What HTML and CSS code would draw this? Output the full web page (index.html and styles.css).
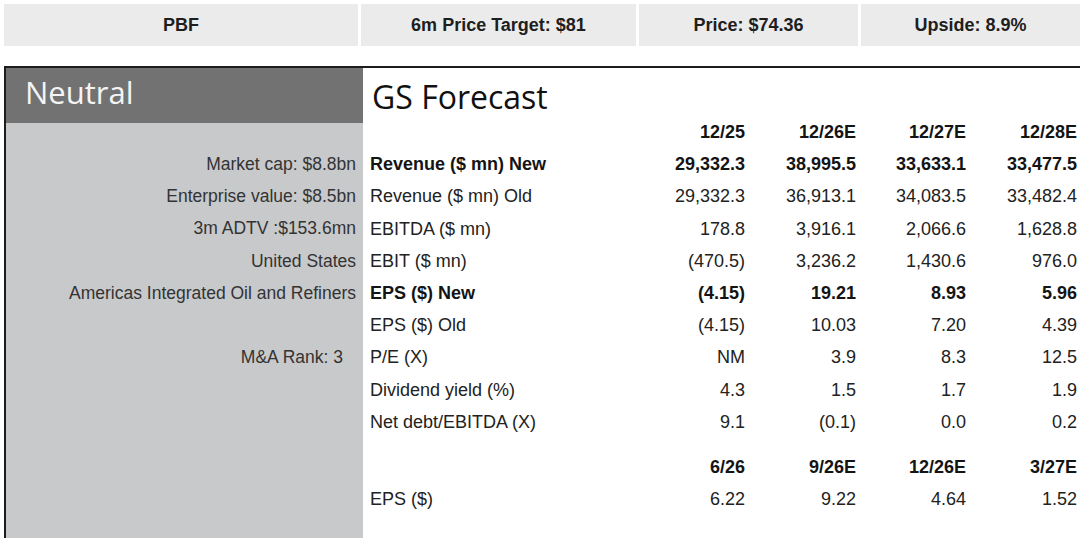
FILE: index.html
```html
<!DOCTYPE html>
<html lang="en">
<head>
<meta charset="utf-8">
<title>PBF – GS Forecast</title>
<link rel="stylesheet" href="styles.css">
</head>
<body>
<div class="topbar">
  <div class="cell c1">PBF</div>
  <div class="cell c2">6m Price Target: $81</div>
  <div class="cell c3">Price: $74.36</div>
  <div class="cell c4">Upside: 8.9%</div>
</div>

<div class="box">
  <div class="left">
    <div class="rating">Neutral</div>
    <div class="facts">
      <div class="fact">Market cap: $8.8bn</div>
      <div class="fact">Enterprise value: $8.5bn</div>
      <div class="fact">3m ADTV :$153.6mn</div>
      <div class="fact">United States</div>
      <div class="fact">Americas Integrated Oil and Refiners</div>
      <div class="fact"></div>
      <div class="fact rank">M&amp;A Rank: 3</div>
    </div>
  </div>
  <div class="right">
    <div class="title">GS Forecast</div>
    <div class="grid">
      <div class="lbl"></div><div class="num b">12/25</div><div class="num b">12/26E</div><div class="num b">12/27E</div><div class="num b">12/28E</div>
      <div class="lbl b">Revenue ($ mn) New</div><div class="num b">29,332.3</div><div class="num b">38,995.5</div><div class="num b">33,633.1</div><div class="num b">33,477.5</div>
      <div class="lbl">Revenue ($ mn) Old</div><div class="num">29,332.3</div><div class="num">36,913.1</div><div class="num">34,083.5</div><div class="num">33,482.4</div>
      <div class="lbl">EBITDA ($ mn)</div><div class="num">178.8</div><div class="num">3,916.1</div><div class="num">2,066.6</div><div class="num">1,628.8</div>
      <div class="lbl">EBIT ($ mn)</div><div class="num">(470.5)</div><div class="num">3,236.2</div><div class="num">1,430.6</div><div class="num">976.0</div>
      <div class="lbl b">EPS ($) New</div><div class="num b">(4.15)</div><div class="num b">19.21</div><div class="num b">8.93</div><div class="num b">5.96</div>
      <div class="lbl">EPS ($) Old</div><div class="num">(4.15)</div><div class="num">10.03</div><div class="num">7.20</div><div class="num">4.39</div>
      <div class="lbl">P/E (X)</div><div class="num">NM</div><div class="num">3.9</div><div class="num">8.3</div><div class="num">12.5</div>
      <div class="lbl">Dividend yield (%)</div><div class="num">4.3</div><div class="num">1.5</div><div class="num">1.7</div><div class="num">1.9</div>
      <div class="lbl">Net debt/EBITDA (X)</div><div class="num">9.1</div><div class="num">(0.1)</div><div class="num">0.0</div><div class="num">0.2</div>
      <div class="spacer"></div>
      <div class="lbl"></div><div class="num b">6/26</div><div class="num b">9/26E</div><div class="num b">12/26E</div><div class="num b">3/27E</div>
      <div class="lbl">EPS ($)</div><div class="num">6.22</div><div class="num">9.22</div><div class="num">4.64</div><div class="num">1.52</div>
    </div>
  </div>
</div>
</body>
</html>
```

FILE: styles.css
```css
html, body {
  margin: 0;
  padding: 0;
  background: #ffffff;
}

body {
  width: 1080px;
  height: 538px;
  overflow: hidden;
  font-family: "Liberation Sans", Arial, sans-serif;
  color: #222222;
}

.topbar {
  display: flex;
  gap: 3px;
  padding: 4px 0 0 4px;
}

.cell {
  height: 42px;
  background: #ebebeb;
  display: flex;
  align-items: center;
  justify-content: center;
  font-weight: bold;
  font-size: 18px;
  color: #1e1e1e;
}

.c1 { width: 354px; }
.c2 { width: 275px; }
.c3 { width: 219px; }
.c4 { flex: 1; }

.box {
  margin: 20px 0 0 4px;
  border-top: 2px solid #1c1c1c;
  border-left: 2px solid #1c1c1c;
  display: flex;
  height: 480px;
}

.left {
  width: 357px;
  flex: none;
  background: #c8c9cb;
  display: flex;
  flex-direction: column;
}

.rating {
  height: 55px;
  background: #727272;
  color: #f4f4f4;
  font-family: "Open Sans", sans-serif;
  font-size: 31px;
  line-height: 49px;
  padding-left: 19px;
  box-sizing: border-box;
}

.facts {
  padding-top: 25px;
  padding-right: 7px;
}

.fact {
  height: 32.2px;
  line-height: 32.2px;
  text-align: right;
  font-size: 17.5px;
  color: #333333;
  white-space: nowrap;
}

.fact.rank {
  padding-right: 13px;
}

.right {
  flex: 1;
  padding: 0 3px 0 7px;
}

.title {
  height: 48px;
  padding-left: 2px;
  font-family: "Open Sans", sans-serif;
  font-size: 32px;
  line-height: 58px;
  color: #111111;
  white-space: nowrap;
}

.grid {
  display: grid;
  grid-template-columns: 265px 110px 111px 110px 111px;
  grid-template-rows: repeat(10, 32.2px) 13px repeat(2, 32.2px);
  font-size: 18px;
}

.lbl, .num {
  line-height: 33px;
  white-space: nowrap;
  color: #222222;
}

.num {
  text-align: right;
}

.b {
  font-weight: bold;
  color: #141414;
}

.spacer {
  grid-column: 1 / -1;
}
```
